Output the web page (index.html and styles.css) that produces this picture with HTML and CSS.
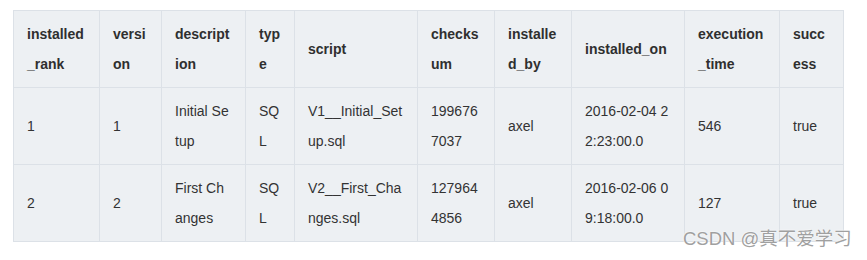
FILE: index.html
```html
<!DOCTYPE html>
<html lang="zh-CN">
<head>
  <meta charset="UTF-8"/>
  <title>flyway_schema_history</title>
  <link rel="stylesheet" href="styles.css">
</head>
<body>
  <div class="wrap">
    <table class="history">
      <colgroup>
        <col class="c-rank"><col class="c-ver"><col class="c-desc"><col class="c-type"><col class="c-script">
        <col class="c-sum"><col class="c-by"><col class="c-on"><col class="c-exec"><col class="c-ok">
      </colgroup>
      <thead>
        <tr>
          <th>installed_rank</th>
          <th>version</th>
          <th>description</th>
          <th>type</th>
          <th>script</th>
          <th>checksum</th>
          <th>installed_by</th>
          <th>installed_on</th>
          <th>execution_time</th>
          <th>success</th>
        </tr>
      </thead>
      <tbody>
        <tr>
          <td>1</td>
          <td>1</td>
          <td>Initial Setup</td>
          <td>SQL</td>
          <td>V1__Initial_Setup.sql</td>
          <td>1996767037</td>
          <td>axel</td>
          <td>2016-02-04 22:23:00.0</td>
          <td>546</td>
          <td>true</td>
        </tr>
        <tr>
          <td>2</td>
          <td>2</td>
          <td>First Changes</td>
          <td>SQL</td>
          <td>V2__First_Changes.sql</td>
          <td>1279644856</td>
          <td>axel</td>
          <td>2016-02-06 09:18:00.0</td>
          <td>127</td>
          <td>true</td>
        </tr>
      </tbody>
    </table>
    <div class="watermark">CSDN @真不爱学习</div>
  </div>
</body>
</html>
```

FILE: styles.css
```css
* { margin:0; padding:0; box-sizing:border-box; }
body { background:#fff; font-family:"Liberation Sans", Arial, "Noto Sans CJK SC", sans-serif; color:#333; }

.wrap {
  position: relative;
  padding: 10px 13px;
  width: 867px;
  height: 260px;
}

/* tabela */
.history {
  border-collapse: collapse;
  table-layout: fixed;
  width: 830px;
  font-size: 14px;
  line-height: 30px;
}
.history th, .history td {
  background: #edf0f3;
  border: 1px solid #dce1e7;
  padding: 8px 14px 8px 13px;
  text-align: left;
  vertical-align: middle;
  word-break: break-all;
}
.history th { font-weight: bold; color:#2f2f2f; }

.c-rank { width:86px; }
.c-ver { width:62px; }
.c-desc { width:84px; }
.c-type { width:49px; }
.c-script { width:123px; }
.c-sum { width:77px; }
.c-by { width:77px; }
.c-on { width:113px; }
.c-exec { width:95px; }
.c-ok { width:64px; }

/* marca d'agua */
.watermark {
  position: absolute;
  left: 683px;
  top: 227px;
  font-size: 18.5px;
  line-height: 24px;
  color: #a0a0a0;
  text-shadow: 0 0 2px #fff, 0 0 1px #fff;
  white-space: nowrap;
}
```
